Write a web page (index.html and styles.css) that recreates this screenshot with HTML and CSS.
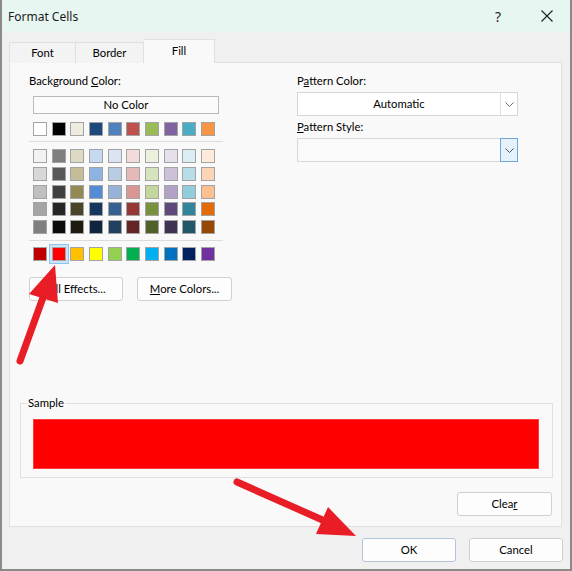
FILE: index.html
```html
<!DOCTYPE html>
<html>
<head>
<meta charset="utf-8">
<link rel="stylesheet" href="styles.css">
</head>
<body>
<div class="window">
  <div class="titlebar">
    <span class="title">Format Cells</span>
    <span class="help">?</span>
    <span class="close"><svg width="12" height="12" viewBox="0 0 12 12"><path d="M0.5 0.5 L11.5 11.5 M11.5 0.5 L0.5 11.5" stroke="#1f1f1f" stroke-width="1.1" fill="none"/></svg></span>
  </div>
  <div class="body">
    <div class="tabs">
      <div class="tab t-font">Font</div>
      <div class="tab t-border">Border</div>
      <div class="tab t-fill active">Fill</div>
    </div>
    <div class="panel">
      <div class="top">
        <div class="col-left">
          <div class="label">Background <u>C</u>olor:</div>
          <div class="nocolor">No Color</div>
          <div class="swatches first">
            <span class="sw" style="background:#FFFFFF"></span><span class="sw" style="background:#000000"></span><span class="sw" style="background:#EEECE1"></span><span class="sw" style="background:#1F497D"></span><span class="sw" style="background:#4F81BD"></span><span class="sw" style="background:#C0504D"></span><span class="sw" style="background:#9BBB59"></span><span class="sw" style="background:#8064A2"></span><span class="sw" style="background:#4BACC6"></span><span class="sw" style="background:#F79646"></span>
          </div>
          <div class="sep"></div>
          <div class="swatches grid">
            <span class="sw" style="background:#F2F2F2"></span><span class="sw" style="background:#7F7F7F"></span><span class="sw" style="background:#DDD9C3"></span><span class="sw" style="background:#C6D9F0"></span><span class="sw" style="background:#DBE5F1"></span><span class="sw" style="background:#F2DCDB"></span><span class="sw" style="background:#EBF1DD"></span><span class="sw" style="background:#E5E0EC"></span><span class="sw" style="background:#DBEEF3"></span><span class="sw" style="background:#FDEADA"></span>
            <span class="sw" style="background:#D8D8D8"></span><span class="sw" style="background:#595959"></span><span class="sw" style="background:#C4BD97"></span><span class="sw" style="background:#8DB3E2"></span><span class="sw" style="background:#B8CCE4"></span><span class="sw" style="background:#E5B9B7"></span><span class="sw" style="background:#D7E3BC"></span><span class="sw" style="background:#CCC1D9"></span><span class="sw" style="background:#B7DDE8"></span><span class="sw" style="background:#FBD5B5"></span>
            <span class="sw" style="background:#BFBFBF"></span><span class="sw" style="background:#3F3F3F"></span><span class="sw" style="background:#938953"></span><span class="sw" style="background:#548DD4"></span><span class="sw" style="background:#95B3D7"></span><span class="sw" style="background:#D99694"></span><span class="sw" style="background:#C3D69B"></span><span class="sw" style="background:#B2A2C7"></span><span class="sw" style="background:#92CDDC"></span><span class="sw" style="background:#FAC08F"></span>
            <span class="sw" style="background:#A5A5A5"></span><span class="sw" style="background:#262626"></span><span class="sw" style="background:#494429"></span><span class="sw" style="background:#17365D"></span><span class="sw" style="background:#366092"></span><span class="sw" style="background:#953734"></span><span class="sw" style="background:#76923C"></span><span class="sw" style="background:#5F497A"></span><span class="sw" style="background:#31859B"></span><span class="sw" style="background:#E36C09"></span>
            <span class="sw" style="background:#7F7F7F"></span><span class="sw" style="background:#0C0C0C"></span><span class="sw" style="background:#1D1B10"></span><span class="sw" style="background:#0F243E"></span><span class="sw" style="background:#244061"></span><span class="sw" style="background:#632423"></span><span class="sw" style="background:#4F6128"></span><span class="sw" style="background:#3F3151"></span><span class="sw" style="background:#205867"></span><span class="sw" style="background:#974806"></span>
          </div>
          <div class="sep sep2"></div>
          <div class="swatches std">
            <span class="sw" style="background:#C00000"></span><span class="sw selected" style="background:#FF0000"></span><span class="sw" style="background:#FFC000"></span><span class="sw" style="background:#FFFF00"></span><span class="sw" style="background:#92D050"></span><span class="sw" style="background:#00B050"></span><span class="sw" style="background:#00B0F0"></span><span class="sw" style="background:#0070C0"></span><span class="sw" style="background:#002060"></span><span class="sw" style="background:#7030A0"></span>
          </div>
          <div class="btnrow">
            <div class="btn b-effects">F<u>i</u>ll Effects...</div>
            <div class="btn b-more"><u>M</u>ore Colors...</div>
          </div>
        </div>
        <div class="col-right">
          <div class="label">P<u>a</u>ttern Color:</div>
          <div class="combo">
            <div class="combo-text">Automatic</div>
            <div class="combo-arrow"><svg width="9" height="5" viewBox="0 0 9 5"><path d="M0.5 0.5 L4.5 4.5 L8.5 0.5" stroke="#6b6b6b" stroke-width="1" fill="none"/></svg></div>
          </div>
          <div class="label label2"><u>P</u>attern Style:</div>
          <div class="combo combo2">
            <div class="combo-text"></div>
            <div class="combo-arrow"><svg width="9" height="5" viewBox="0 0 9 5"><path d="M0.5 0.5 L4.5 4.5 L8.5 0.5" stroke="#4d4d4d" stroke-width="1" fill="none"/></svg></div>
          </div>
        </div>
      </div>
      <fieldset class="sample">
        <legend>Sample</legend>
        <div class="sample-fill"></div>
      </fieldset>
      <div class="clearrow">
        <div class="btn b-clear">Clea<u>r</u></div>
      </div>
    </div>
    <div class="footer">
      <div class="btn b-ok">OK</div>
      <div class="btn b-cancel">Cancel</div>
    </div>
  </div>
  <svg class="annot" width="572" height="571" viewBox="0 0 572 571">
    <line x1="20" y1="361" x2="45" y2="292" stroke="#e91d25" stroke-width="7" stroke-linecap="round"/>
    <polygon points="55,265 29,294 58,303" fill="#e91d25"/>
    <line x1="237" y1="482" x2="327" y2="522" stroke="#e91d25" stroke-width="7" stroke-linecap="round"/>
    <polygon points="356,536 328,507 316,534" fill="#e91d25"/>
  </svg>
</div>
</body>
</html>
```
FILE: styles.css
```css
* { box-sizing: border-box; }
html, body { margin: 0; padding: 0; }
body {
  width: 572px;
  height: 571px;
  overflow: hidden;
  font-family: "Lato", "Noto Sans", sans-serif;
  font-size: 11.3px;
  color: #000;
  background: #f0f0f0;
}
u { text-decoration: underline; text-underline-offset: 1px; }

.window {
  position: relative;
  width: 572px;
  height: 571px;
  background: #f0f0f0;
  border-left: 2px solid #8a8a8a;
  border-right: 2px solid #8a8a8a;
  border-bottom: 2px solid #8a8a8a;
  display: flex;
  flex-direction: column;
}

.titlebar {
  height: 32px;
  flex: none;
  background: #e8f6f1;
  display: flex;
  align-items: center;
  padding-left: 6px;
}
.title { font-family: "Noto Sans", sans-serif; font-size: 12px; color: #1b1b1b; }
.help {
  margin-left: auto;
  width: 20px;
  text-align: center;
  font-family: "Noto Sans", sans-serif;
  font-size: 14px;
  color: #1f1f1f;
  margin-right: 16px;
}
.close {
  width: 46px;
  height: 32px;
  display: flex;
  align-items: center;
  justify-content: center;
}

.body {
  flex: 1;
  padding: 7px 8px 0 7px;
  display: flex;
  flex-direction: column;
}

.tabs {
  display: flex;
  align-items: flex-end;
  height: 24px;
  position: relative;
  z-index: 2;
  margin-bottom: -1px;
  flex: none;
}
.tab {
  height: 21px;
  border: 1px solid #e0e0e0;
  border-bottom: none;
  border-left: none;
  background: #f3f3f3;
  text-align: center;
  line-height: 20px;
}
.t-font { width: 67px; border-left: 1px solid #e0e0e0; }
.t-border { width: 68px; }
.tab.active {
  width: 71px;
  height: 24px;
  background: #f9f9f9;
  line-height: 22px;
  border-left: none;
}

.panel {
  width: 553px;
  height: 465px;
  flex: none;
  border: 1px solid #e0e0e0;
  background: #f9f9f9;
  padding-top: 10px;
  display: flex;
  flex-direction: column;
}

.top {
  display: flex;
  padding-left: 19px;
}
.col-left { width: 204px; display: flex; flex-direction: column; }
.col-right { width: 221px; margin-left: 64px; display: flex; flex-direction: column; }

.label { height: 16px; line-height: 16px; }

.nocolor {
  margin-top: 7px;
  margin-left: 4px;
  width: 186px;
  height: 18px;
  border: 1px solid #b9b9b9;
  background: #fbfbfb;
  text-align: center;
  line-height: 16px;
}

.swatches {
  display: grid;
  grid-template-columns: repeat(10, 14px);
  column-gap: 4.667px;
  row-gap: 3.75px;
  margin-left: 4px;
}
.swatches.first { margin-top: 8px; }
.swatches.grid { margin-top: 7px; }
.swatches.std { margin-top: 6px; }
.sw {
  display: block;
  width: 14px;
  height: 14px;
  border: 1px solid #a3a3a3;
}
.sw.selected {
  box-shadow: 0 0 0 2px #cce4f8, 0 0 0 3px #8fc4ee;
}

.sep {
  width: 194px;
  height: 1px;
  background: #dcdcdc;
  margin-top: 5px;
}
.sep2 { margin-top: 6px; }

.btn {
  height: 24px;
  border: 1px solid #d0d0d0;
  border-radius: 3px;
  background: #fdfdfd;
  text-align: center;
  line-height: 22px;
}
.btnrow { display: flex; margin-top: 16px; }
.b-effects { width: 94px; }
.b-more { width: 95px; margin-left: 14px; }

.combo {
  margin-top: 3px;
  height: 24px;
  width: 221px;
  display: flex;
  border: 1px solid #d6d6d6;
  background: #ffffff;
}
.combo-text {
  flex: 1;
  text-align: center;
  line-height: 22px;
}
.combo-arrow {
  width: 17px;
  border-left: 1px solid #e0e0e0;
  display: flex;
  align-items: center;
  justify-content: center;
}
.label2 { margin-top: 3px; }
.combo2 { margin-top: 3px; background: #fafafa; border-color: #d9d9d9; }
.combo2 .combo-arrow {
  width: 18px;
  margin: -1px -1px -1px 0;
  border: 1px solid #6fa7d9;
  background: #e5f1fb;
}

.sample {
  margin: 94px 0 0 10px;
  width: 533px;
  border: 1px solid #e0e0e0;
  padding: 8px 13px 8px 12px;
  min-width: 0;
}
.sample legend {
  padding: 0 1px;
  margin-left: -6px;
  line-height: 16px;
  height: 16px;
}
.sample-fill {
  width: 506px;
  height: 50px;
  background: #ff0000;
  border: 1px solid #ff3b3b;
}

.clearrow {
  display: flex;
  justify-content: flex-end;
  padding-right: 9px;
  margin-top: 14px;
}
.b-clear { width: 95px; }

.footer {
  display: flex;
  justify-content: flex-end;
  margin-top: 11px;
  margin-right: -1px;
  gap: 13px;
}
.b-ok { width: 94px; border-color: #b3c5da; }
.b-cancel { width: 94px; }

.annot {
  position: absolute;
  left: -2px;
  top: 0;
  pointer-events: none;
  z-index: 10;
}
```
